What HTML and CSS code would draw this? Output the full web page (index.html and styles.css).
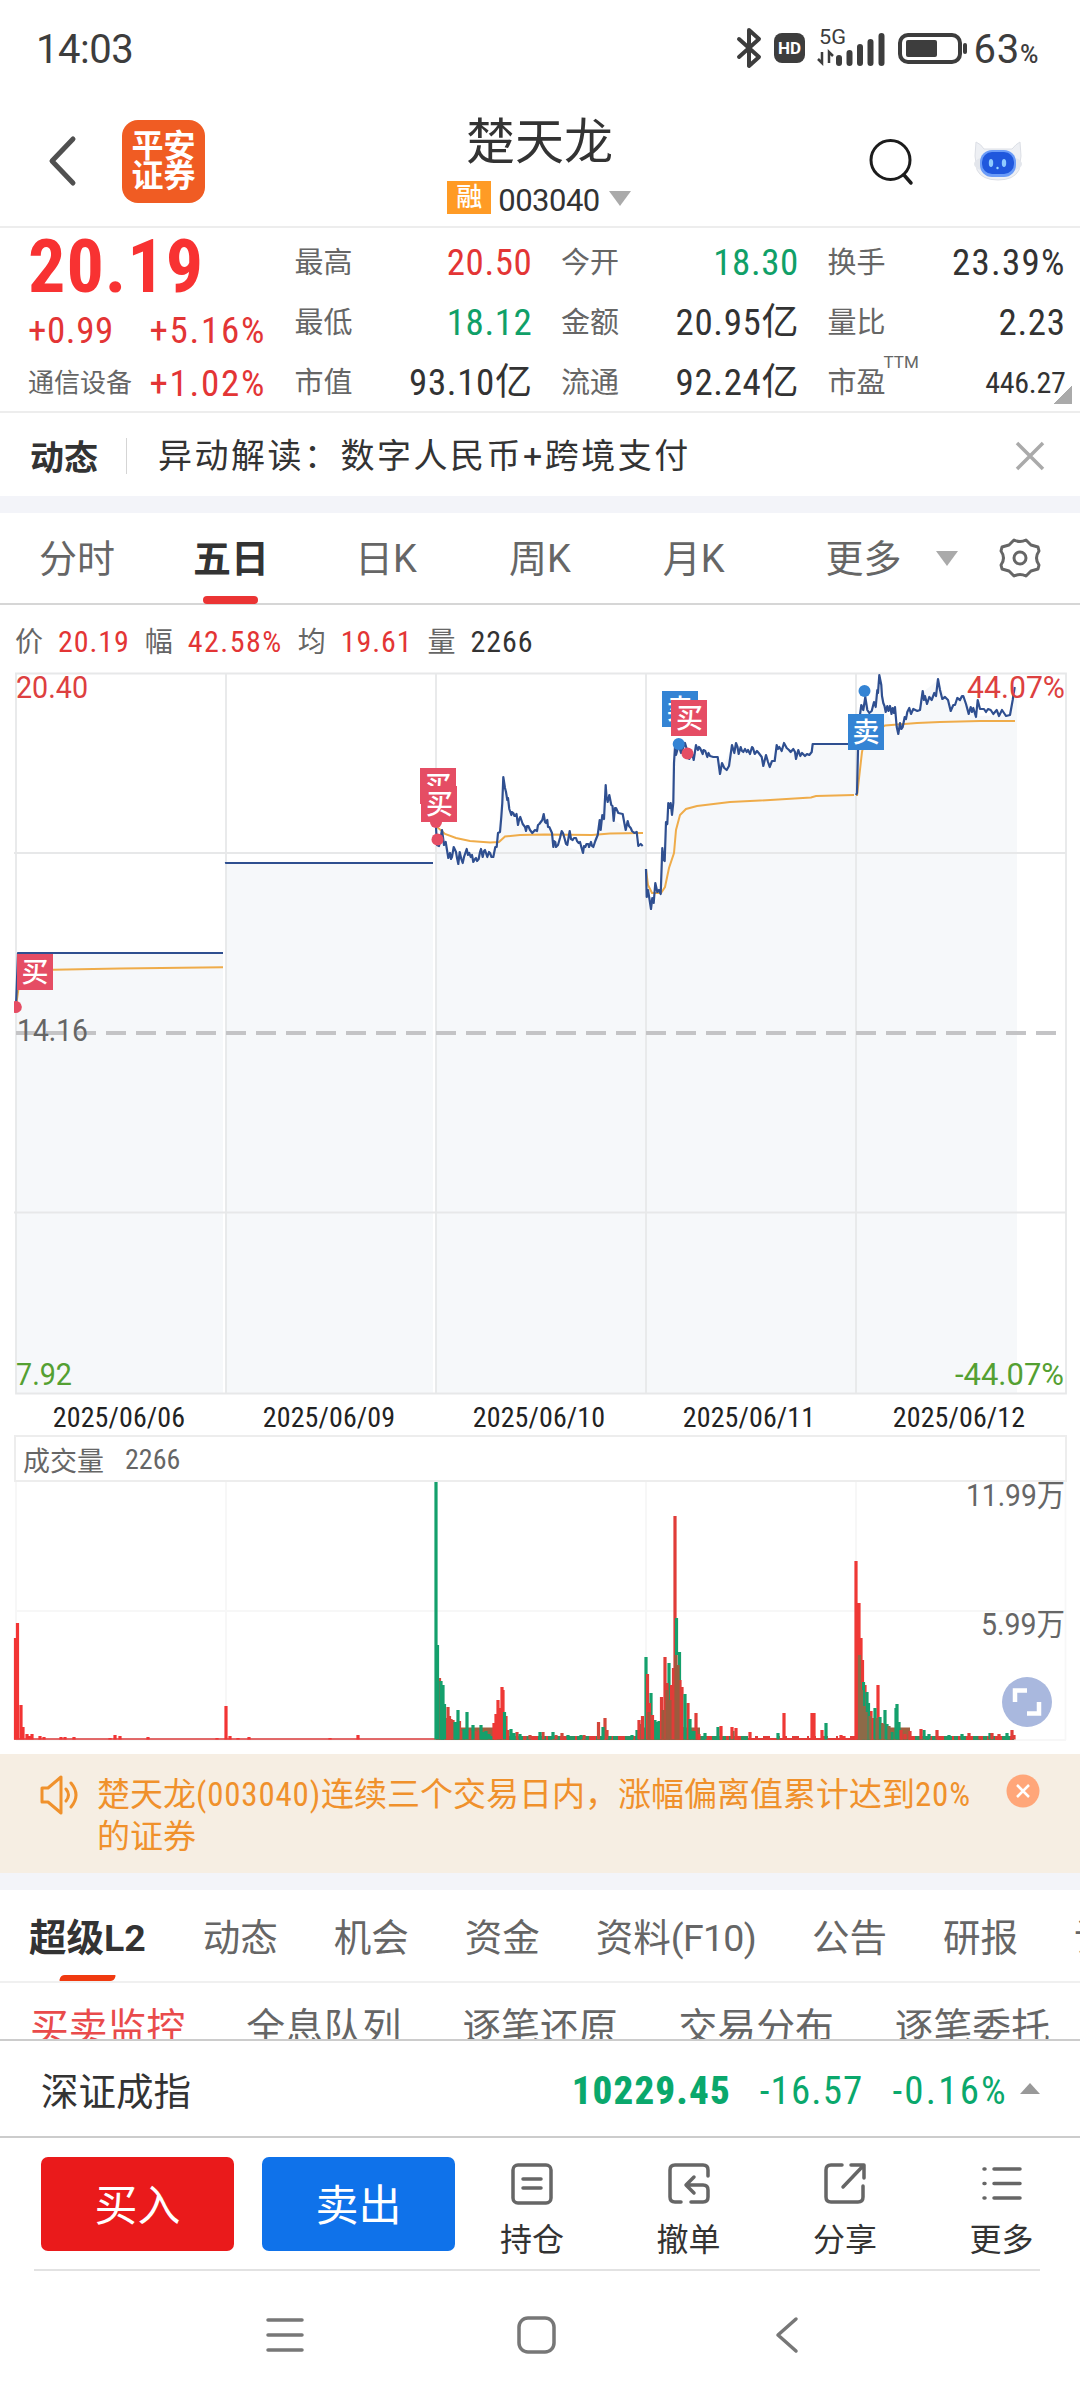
FILE: index.html
```html
<!DOCTYPE html>
<html lang="zh-CN">

<head>
    <meta charset="UTF-8">
    <meta name="viewport" content="width=device-width, initial-scale=1.0">
    <title>楚天龙 003040</title>
    <link rel="stylesheet" href="styles.css">
</head>

<body>
    <div class="status-bar">
        <span class="time">14:03</span>
        <svg class="status-icons" width="232" height="44" viewBox="733 26 232 44">
            <path d="M737 39l20 18-10 9V30l10 9-20 18" fill="none" stroke="#3d3d3d" stroke-width="4" stroke-linejoin="round" stroke-linecap="round" />
            <rect x="772" y="33" width="31" height="30" rx="8" fill="#3d3d3d" />
            <text x="787.500" y="54" class="hd">HD</text>
            <text x="817" y="44" class="net" textLength="27" lengthAdjust="spacingAndGlyphs">5G</text>
            <path d="M820 52v11l-4-4M827 63V52l4 4" fill="none" stroke="#3d3d3d" stroke-width="2.500" />
            <path d="M837 63v-5M847.500 63v-10M858 63v-16M868.500 63v-21M879.500 63v-27" stroke="#3d3d3d" stroke-width="6" stroke-linecap="round" />
            <rect x="898" y="35" width="60" height="27" rx="8" fill="none" stroke="#3d3d3d" stroke-width="4" />
            <rect x="904" y="40" width="31" height="17" rx="2" fill="#3d3d3d" />
            <rect x="961" y="43" width="4" height="11" rx="2" fill="#3d3d3d" />
        </svg>
        <span class="battery">63<small>%</small></span>
    </div>

    <div class="header">
        <svg class="back" width="32" height="52" viewBox="0 0 32 52">
            <path d="M27 4L6 26l21 22" fill="none" stroke="#505050" stroke-width="5" stroke-linecap="round" stroke-linejoin="round" />
        </svg>
        <div class="logo"><span>平安</span><span>证券</span></div>
        <div class="title">
            <h1>楚天龙</h1>
            <div class="code"><span class="rong">融</span><span class="code-no">003040</span><i class="tri-down"></i></div>
        </div>
        <svg class="search" width="48" height="50" viewBox="868 138 48 50">
            <circle cx="890.500" cy="162" r="19.500" fill="none" stroke="#1c1c1c" stroke-width="3" />
            <path d="M904 177l7 8" stroke="#1c1c1c" stroke-width="3.500" stroke-linecap="round" />
        </svg>
        <svg class="robot" width="52" height="44" viewBox="972 141 52 44">
            <path d="M976 144q5 2 8 7h28q4-5 8-7l1 14-2 14q-5 10-21 10t-21-10l-2-14z" fill="#eef0f4" stroke="#dcdfe6" />
            <ellipse cx="998" cy="166" rx="24" ry="9" fill="#e3e6ec" />
            <rect x="980" y="152" width="36" height="27" rx="12" fill="#6b9cf8" />
            <rect x="982" y="154" width="32" height="22" rx="10" fill="#1f57dd" />
            <ellipse cx="991" cy="165" rx="2.200" ry="4" fill="#8fcbff" />
            <ellipse cx="1004" cy="165" rx="2.200" ry="4" fill="#8fcbff" />
            <circle cx="997.500" cy="170" r="1.200" fill="#9ddcff" />
        </svg>
    </div>

    <div class="quote">
        <div class="main-price">
            <div class="price num">20.19</div>
            <div class="change num red"><span>+0.99</span><span class="pct">+5.16%</span></div>
            <div class="sector"><span class="sector-name">通信设备</span><span class="num pct red">+1.02%</span></div>
        </div>
        <div class="quote-col">
            <div class="cell"><label>最高</label><span class="num red">20.50</span></div>
            <div class="cell"><label>最低</label><span class="num green">18.12</span></div>
            <div class="cell"><label>市值</label><span class="num">93.10亿</span></div>
        </div>
        <div class="quote-col">
            <div class="cell"><label>今开</label><span class="num green">18.30</span></div>
            <div class="cell"><label>金额</label><span class="num">20.95亿</span></div>
            <div class="cell"><label>流通</label><span class="num">92.24亿</span></div>
        </div>
        <div class="quote-col">
            <div class="cell"><label>换手</label><span class="num turnover">23.39%</span></div>
            <div class="cell"><label>量比</label><span class="num">2.23</span></div>
            <div class="cell"><label>市盈<sup>TTM</sup></label><span class="num pe">446.27</span></div>
        </div>
        <i class="corner"></i>
    </div>

    <div class="news">
        <b>动态</b>
        <span class="news-text">异动解读：数字人民币+跨境支付</span>
        <svg width="30" height="30" viewBox="0 0 30 30">
            <path d="M2 2l26 26M28 2L2 28" stroke="#aaa" stroke-width="3.500" />
        </svg>
    </div>

    <div class="tabs">
        <span>分时</span>
        <span class="active">五日</span>
        <span>日K</span>
        <span>周K</span>
        <span>月K</span>
        <span class="more">更多</span>
        <i class="tri-down"></i>
        <svg width="44" height="44" viewBox="-22 -22 44 44">
            <path d="M-6-18q6 3 12 0l5 5 7 2 1 4q-5 7 0 14l-1 4-7 2-5 5q-6-3-12 0l-5-5-7-2-1-4q5-7 0-14l1-4 7-2z" fill="none" stroke="#666" stroke-width="3" stroke-linejoin="round" />
            <circle r="6" fill="none" stroke="#666" stroke-width="3" />
        </svg>
    </div>

    <div class="info">
        <label>价</label><span class="num red">20.19</span>
        <label>幅</label><span class="num pct red">42.58%</span>
        <label>均</label><span class="num red">19.61</span>
        <label>量</label><span class="num">2266</span>
    </div>

    <svg class="price-chart" width="1080" height="724" viewBox="0 672 1080 724">
        <!-- area under the price line -->
        <g fill="#f6f8fa">
            <path d="M16 1394V1007L18 953H223V1394z" />
            <path d="M223 1394H226V863H433V1394z" />
            <path d="M433 1394H436V827L437 845 442 832 448 858 458 862 467 849 473 862 481 850 493 857 498 833 503 777 511 815 532 832 544 815 552 833 555 843 583 852 597 835 606 786 614 820 634 833 638 846H646V870L651 908 661 894 662 848 672 815 675 748 717 757 720 774 732 746 770 766 777 746 811 754 813 744H856V795L859 720 865 697 871 712 879 676 886 711 898 734 907 713 920 710 923 692 938 680 951 710 963 696 976 716 1010 715 1015 688H1017V1394z" />
        </g>
        <g stroke="#e7e8e9" stroke-width="1.800" fill="none">
            <path d="M15 673.500H1066V1393.500H16V673.500M226 674V1394M436 674V1394M646 674V1394M856 674V1394M14 853H1066M14 1212.500H1066" />
        </g>
        <path d="M16 1033H1060" stroke="#c4c4c6" stroke-width="4" stroke-dasharray="20 10" />
        <!-- average -->
        <g fill="none" stroke="#efac4a" stroke-width="2">
            <path d="M16 1006L19 985 24 973 53 969.700 120 968.500 223 967.300" />
            <path d="M436 826L445 834 456 838 470 841 490 842.500 499 842 505 836.500 520 835 545 834.500 592 835 610 833.500 643 833" />
            <path d="M646 869L648 885 652 893 661 893 665 887 669 868 674 853 676 830 680 815 686 809 697 806 730 802 760 800.500 811 797.500 816 796 854 795" />
            <path d="M857 796L862 752 866 735 885 725.500 917 723 940 722 980 721 1015 721" />
        </g>
        <!-- price -->
        <g fill="none" stroke="#2f4f90" stroke-width="2.200" stroke-linejoin="round">
            <path d="M16 1006L18 953H223M226 862V863H433" />
            <path d="M436 827L437 845 439 846 442 830 444 845 445.700 842 447 850 448.300 858 450 853 451 859 452 857 453.700 847 456 852 457 858 458.300 864 459.700 852 461.300 859 462.700 863 464 857 466.700 849 468 855 469.300 853 470.700 857 472 855 473.300 862 475 859 476 858 477 861 478.700 859 480 852 481 849 482.700 857 484 851 485 850 487.300 857 489 852 490 853 491.500 857 493.300 857 495.300 847 496.700 847 498 833 500 832 501.300 817 502.300 803 503.300 777 505 788 506 792 507.300 800 508 798 509.300 809 511.300 815 512 812 513.300 813 514.500 816 515.700 816 516.500 814 518 825 519 820 520.300 817 522.700 824 525 827 526 831 527 826 528.300 826 530 830 532.300 833 535 830 537 831 538 825 539.300 824 542.300 820 543.700 814 545 822 546 823 547.300 820 548 827 549.300 827 552 833 553.300 847 554 841 555.300 842 556 847 558 845 560 838 561.700 831 563 833 565 840 566 844 567.300 845 569.700 831 571 839 572.700 840 574 838 576 838 577 841 578.700 843 580 842 581.300 847 583 853 584 846 585.300 847 586.500 844 588.300 844 589 847 591 842 592 846 593.300 847 595.300 841 597.700 835 599.700 820 600.700 830 602.300 815 604 819 605.700 785 606.500 797 607.700 802 609.300 795 611.300 805 612.500 806 613.700 821 615 808 616 808 618.300 813 622.700 814 624.700 825 625.700 830 627.700 821 629 826 630.700 828 632 831 634.300 833 636.700 832 638.300 846 640.700 844 642.700 846" />
            <path d="M646 869L646.700 897 648 890 649.300 898 651 909 652.300 898 653.700 903 655.300 883 657.300 892 659 890 660.700 894 662.300 848 663.700 860 664.700 861 666 822 667.300 824 668.300 803 669.700 808 670.700 803 672 815 673.300 803 674 763 675 747 676 755 678.700 745 681 753 685 743 687 750 689.300 759 691.300 753 692.500 755 693.700 760 696 745 697 748 698 750 699 747 700 748 702.700 754 703.500 750 705.300 751 707.300 757 708.500 753 710 756 713.300 757 717.700 757 720 774 722 763 724.300 768 726.700 770 729 766 732 745 734.300 753 736 743 737.500 747 738.700 754 740.700 747 742 751 743.300 752 745 749 746.700 752 748 750 750 754 752 747 753 748 754.700 754 757 751 758.700 753 761.700 757 763.300 766 766 755 768 762 769.700 767 772 761 774.700 761 776.700 745 778 749 779.300 747 781.700 751 784 743 786.700 748 789 750 790.700 752 793.300 749 795 752 796 759 798.300 750 800.300 756 802 753 805 756 807 754 809.300 755 811.700 752 812.700 744H856" />
            <path d="M856 795L857 793 858 750 859.300 720 861.300 705 863.300 710 865.300 697 867.300 710 869.300 713 871.700 711 874 702 875.700 707 877.300 690 878 693 879.300 675 881.300 685 882 696 883.300 703 884.500 706 885.700 712 887.300 706 888.500 711 890 706 891.500 714 892.700 708 894 713 895 707 896.700 727 898.300 734 900 723 901.300 729 902.700 727 904.700 717 906 719 907.300 712 909.300 708 911 714 913.300 709 917.300 711 920 710 922.700 691 924 700 925 696 927 704 929.300 697 931.700 700 934.300 693 936 696 938 679 940 690 942.300 699 945 697 948 700 950.700 711 953.300 705 955 705 957.300 698 960 700 962 696 963.300 696 966 704 968.700 714 970.700 707 972 712 973.300 708 976 717 977.700 700 980 709 984 709 986 712 988 709 990.700 710 993.300 714 996.700 710 999 716 1002 710 1006 716 1010 715 1012.700 700 1014.700 687" />
        </g>
        <!-- trade marks -->
        <g class="marks">
            <path d="M14 1001.300a6 6 0 1 1 0 11.400z" fill="#e54d64" />
            <rect x="17" y="954" width="36" height="36" fill="#e54d64" /><text x="35" y="981.500">买</text>
            <circle cx="436" cy="822" r="6" fill="#e54d64" />
            <circle cx="437.500" cy="839.500" r="6" fill="#e54d64" />
            <rect x="420" y="768" width="36" height="36" fill="#e54d64" /><text x="438" y="795.500">买</text>
            <rect x="421" y="786" width="36" height="36" fill="#e54d64" /><text x="439.500" y="813.500">买</text>
            <circle cx="678.700" cy="744" r="6" fill="#3484d4" />
            <circle cx="687.500" cy="753.500" r="6" fill="#e54d64" />
            <rect x="662" y="691" width="36" height="36" fill="#3484d4" /><text x="680" y="718.500">卖</text>
            <rect x="671" y="700" width="36" height="36" fill="#e54d64" /><text x="689.500" y="727.500">买</text>
            <circle cx="864.500" cy="691" r="6" fill="#3484d4" />
            <rect x="848" y="714" width="36" height="36" fill="#3484d4" /><text x="866" y="741.500">卖</text>
        </g>
        <g class="axis">
            <text x="16" y="698" fill="#dd4040" textLength="72" lengthAdjust="spacingAndGlyphs">20.40</text>
            <text x="17" y="1041" fill="#666" textLength="71" lengthAdjust="spacingAndGlyphs">14.16</text>
            <text x="16" y="1385" fill="#54a032" textLength="56" lengthAdjust="spacingAndGlyphs">7.92</text>
            <text x="967" y="698" fill="#dd4040" textLength="98" lengthAdjust="spacingAndGlyphs">44.07%</text>
            <text x="955" y="1385" fill="#54a032" textLength="109" lengthAdjust="spacingAndGlyphs">-44.07%</text>
        </g>
    </svg>

    <div class="dates num">
        <span>2025/06/06</span>
        <span>2025/06/09</span>
        <span>2025/06/10</span>
        <span>2025/06/11</span>
        <span>2025/06/12</span>
    </div>

    <div class="vol-head">成交量<span class="num">2266</span></div>
    <div class="vol-box">
        <svg class="vol-chart" width="1080" height="272" viewBox="0 1482 1080 272">
            <path d="M16 1482V1740M226 1482V1740M436 1482V1740M646 1482V1740M856 1482V1740M1065.500 1482V1740M16 1611H1066M16 1740H1066" stroke="#f7f7f7" stroke-width="1.800" />
            <path d="M14 1739H436M856 1739H1014" stroke="#d93a3a" stroke-width="1.500" />
            <path d="M436 1738H748M856 1738H1014" stroke="#2a9363" stroke-width="4" />
            <path d="M436 1738H1014" stroke="#e03c38" stroke-width="4" stroke-dasharray="3 5 7 8 2 4" />
            <path d="M448 1733.500H500M640 1733.500H700M856 1733.500H910" stroke="#a0603f" stroke-width="12" />
            <path d="M748 1739H856" stroke="#e03c38" stroke-width="2" />
            <g stroke-width="3.200" fill="none">
                <path stroke="#f23434" d="M15.500 1739.500V1638M17.500 1739.500V1623M21 1739.500V1705M23 1739.500V1727M27 1739.500V1734M32 1739.500V1734M29 1739.500V1736M40 1739.500V1736M44 1739.500V1737M61 1739.500V1737M65 1739.500V1737M74 1739.500V1737M110 1739.500V1738M115 1739.500V1735M120 1739.500V1736M148 1739.500V1737M217 1739.500V1738M226 1739.500V1706M230 1739.500V1736M238 1739.500V1738M249 1739.500V1737M330 1739.500V1738M358 1739.500V1735" />
                <path stroke="#d3463a" d="M439.500 1739.500V1678M446 1739.500V1718M448 1739.500V1707M449.500 1739.500V1716M451 1739.500V1719M453 1739.500V1720M459.500 1739.500V1721M462 1739.500V1731M469 1739.500V1730M471 1739.500V1731M475 1739.500V1731M477 1739.500V1732M479 1739.500V1730M508 1739.500V1730M517 1739.500V1732M525 1739.500V1736M530 1739.500V1735M543 1739.500V1732M556 1739.500V1735M562 1739.500V1733M598.500 1739.500V1722M605 1739.500V1718M607 1739.500V1730M584 1739.500V1735" />
                <path stroke="#14a06c" d="M436 1739.500V1482M437.500 1739.500V1645M441 1739.500V1681M443 1739.500V1685M444.500 1739.500V1704M455 1739.500V1722M458 1739.500V1710M464 1739.500V1729M467 1739.500V1712M473 1739.500V1725M481 1739.500V1725M483 1739.500V1732M486 1739.500V1731M489 1739.500V1734M492 1739.500V1736" />
                <path stroke="#ee3835" d="M494 1739.500V1723M496 1739.500V1714M498 1739.500V1700M500 1739.500V1708M502 1739.500V1687M503 1739.500V1690M506 1739.500V1716" />
                <path stroke="#14a06c" d="M504.500 1739.500V1712M511 1739.500V1729M514 1739.500V1733M520 1739.500V1734M540 1739.500V1732M553 1739.500V1732M568 1739.500V1735M581 1739.500V1735M603 1739.500V1727M610 1739.500V1736M632 1739.500V1735M637 1739.500V1730M641 1739.500V1724M646 1739.500V1657M651 1739.500V1693M655 1739.500V1720M657 1739.500V1722M659 1739.500V1721M669 1739.500V1663" />
                <path stroke="#e03c38" d="M639 1739.500V1720M642.500 1739.500V1716M647.500 1739.500V1674M649.500 1739.500V1703M652.500 1739.500V1715M661.500 1739.500V1697M665 1739.500V1657M667 1739.500V1683M671.500 1739.500V1685M673.500 1739.500V1668M675 1739.500V1516M680 1739.500V1680M682 1739.500V1687M684 1739.500V1727M688 1739.500V1703M696 1739.500V1713" />
                <path stroke="#14a06c" d="M676.500 1655V1618M679.500 1680V1652M685 1739.500V1694M690 1739.500V1719M692 1739.500V1731M694 1739.500V1731M705 1739.500V1733M718 1739.500V1727M778 1739.500V1733M733 1739.500V1731M826 1739.500V1723" />
                <path stroke="#9b5b3e" d="M663 1739.500V1710M667 1739.500V1690M670 1739.500V1700M676 1739.500V1655M678 1739.500V1665M649 1739.500V1712" />
                <path stroke="#ee3835" d="M699 1739.500V1734M721 1739.500V1726M732 1739.500V1727M736 1739.500V1728M750 1739.500V1732M784 1739.500V1713M812 1739.500V1713M814 1739.500V1713M822 1739.500V1730M841 1739.500V1735M844 1739.500V1736M856 1739.500V1561M859 1739.500V1603M861 1739.500V1638M862.500 1739.500V1660M865 1739.500V1685M871 1739.500V1711M873 1739.500V1718M878 1739.500V1685M882 1739.500V1723" />
                <path stroke="#14a06c" d="M863.500 1739.500V1682M867 1739.500V1692M868.500 1739.500V1703M875 1739.500V1708M880 1739.500V1717M885 1739.500V1710M887 1739.500V1724M892 1739.500V1732M896 1739.500V1708M897 1739.500V1704M899 1739.500V1722M924 1739.500V1730M929 1739.500V1734M949 1739.500V1735M962 1739.500V1734M990 1739.500V1733M1007 1739.500V1733" />
                <path stroke="#8d6a48" d="M859.500 1739.500V1655M861.500 1739.500V1690M864 1739.500V1706M866 1739.500V1712M870 1739.500V1716M877 1739.500V1718M883 1739.500V1724M889 1739.500V1726" />
                <path stroke="#e03c38" d="M901 1739.500V1730M905 1739.500V1734M910 1739.500V1731M921 1739.500V1729M937 1739.500V1730M969 1739.500V1733M980 1739.500V1736M992 1739.500V1733M999 1739.500V1734M1012 1739.500V1730M1014 1739.500V1735" />
            </g>
            <g class="axis" fill="#666">
                <text x="966" y="1506" textLength="99" lengthAdjust="spacingAndGlyphs">11.99万</text>
                <text x="981" y="1635" textLength="84" lengthAdjust="spacingAndGlyphs">5.99万</text>
            </g>
            <circle cx="1027" cy="1702" r="25" fill="#a9b8de" />
            <path d="M1015 1702V1690.500H1027M1039 1702V1713.500H1027" fill="none" stroke="#fff" stroke-width="4.500" />
        </svg>
    </div>

    <div class="notice">
        <svg width="42" height="42" viewBox="0 0 42 42">
            <path d="M2 14h6L21 3v36L8 28H2z" fill="none" stroke="#f0912c" stroke-width="3" stroke-linejoin="round" />
            <path d="M26 15q5 6 0 12M31 9q10 12 0 24" fill="none" stroke="#f0912c" stroke-width="3" stroke-linecap="round" />
        </svg>
        <p>楚天龙<span class="num">(003040)</span>连续三个交易日内，涨幅偏离值累计达到<span class="num">20%</span><br>的证券</p>
        <svg width="34" height="34" viewBox="0 0 34 34">
            <circle cx="17" cy="17" r="16.500" fill="#ffa679" />
            <path d="M11 11l12 12M23 11L11 23" stroke="#fff" stroke-width="2.500" />
        </svg>
    </div>

    <div class="sections">
        <span class="active">超级L2</span>
        <span>动态</span>
        <span>机会</span>
        <span>资金</span>
        <span>资料<span class="f10">(F10)</span></span>
        <span>公告</span>
        <span>研报</span>
        <span>诊</span>
    </div>
    <div class="sub-tabs">
        <span class="active">买卖监控</span>
        <span>全息队列</span>
        <span>逐笔还原</span>
        <span>交易分布</span>
        <span>逐笔委托</span>
    </div>

    <div class="index-bar">
        <span class="index-name">深证成指</span>
        <b class="num">10229.45</b>
        <span class="num diff">-16.57</span>
        <span class="num rate">-0.16%</span>
        <i class="tri-up"></i>
    </div>

    <div class="actions">
        <button class="buy">买入</button>
        <button class="sell">卖出</button>
        <div class="action">
            <svg width="44" height="44" viewBox="0 0 44 44">
                <rect x="3" y="3" width="38" height="38" rx="5" />
                <path d="M13 17h18M13 26h18" />
            </svg>
            <span>持仓</span>
        </div>
        <div class="action">
            <svg width="44" height="44" viewBox="0 0 44 44">
                <path d="M41 14V8q0-5-5-5H8Q3 3 3 8v27q0 5 5 5h6M24 40h12q5 0 5-5V28q0-5-5-5H21M27 15l-8 8 8 8" />
            </svg>
            <span>撤单</span>
        </div>
        <div class="action">
            <svg width="44" height="44" viewBox="0 0 44 44">
                <path d="M19 3H8Q3 3 3 8v27q0 5 5 5h27q5 0 5-5V24M28 3h13v13M40 4L20 25" />
            </svg>
            <span>分享</span>
        </div>
        <div class="action">
            <svg width="44" height="44" viewBox="0 0 44 44">
                <path d="M14 7h26M14 21.500h26M14 36h26M4 7h1M4 21.500h1M4 36h1" />
            </svg>
            <span>更多</span>
        </div>
    </div>

    <div class="nav">
        <svg width="40" height="40" viewBox="0 0 40 40">
            <path d="M3 4h34M3 19h34M3 34h34" />
        </svg>
        <svg width="40" height="40" viewBox="0 0 40 40">
            <rect x="3" y="2" width="35" height="34" rx="9" />
        </svg>
        <svg width="40" height="40" viewBox="0 0 40 40">
            <path d="M29 3L11 19l18 16" />
        </svg>
    </div>
</body>

</html>
```
FILE: styles.css
```css
* {
    box-sizing: border-box;
}

body {
    margin: 0;
    width: 1080px;
    height: 2400px;
    overflow: hidden;
    background: #fff;
    color: #333;
    font-family: Roboto, "Noto Sans CJK SC", sans-serif;
}

svg {
    display: block;
    flex: none;
}

.num {
    font-stretch: semi-condensed;
    letter-spacing: 0.600px;
}

.red {
    color: #e33535;
}

.green {
    color: #10a068;
}

.tri-down {
    border: 11px solid transparent;
    border-top: 15px solid #aaa;
    border-bottom: 0;
}

/* status bar */
.status-bar {
    display: flex;
    align-items: center;
    height: 96px;
    padding: 0 41px 0 36px;
    color: #3d3d3d;
    font-size: 40px;
}

.time {
    flex: 1;
    letter-spacing: -0.500px;
    padding-top: 2px;
}

.battery {
    margin-left: 7px;
    padding-top: 2px;
    white-space: nowrap;
    letter-spacing: 0.700px;
}

.battery small {
    font-size: 25px;
    font-weight: 500;
}

.hd {
    font-size: 17px;
    font-weight: 700;
    fill: #fff;
    text-anchor: middle;
}

.net {
    font-size: 20px;
    fill: #3d3d3d;
}

/* header */
.header {
    display: flex;
    align-items: center;
    height: 132px;
    border-bottom: 2px solid #ededed;
}

.back {
    margin-left: 46px;
}

.logo {
    display: flex;
    flex-direction: column;
    justify-content: center;
    align-items: center;
    width: 83px;
    height: 83px;
    margin-left: 44px;
    border-radius: 16px;
    background: #f05c23;
    color: #fff;
    font-size: 32px;
    font-weight: 700;
    line-height: 30px;
}

.title {
    display: flex;
    flex-direction: column;
    align-items: center;
    width: 335px;
    margin-left: 167px;
    padding-top: 9px;
}

.title h1 {
    margin: 0;
    font-size: 49px;
    font-weight: 400;
    line-height: 66px;
}

.code {
    display: flex;
    align-items: center;
    height: 46px;
    margin-left: -1px;
    font-size: 31px;
}

.code-no {
    padding-top: 3px;
    letter-spacing: -0.500px;
}

.rong {
    width: 44px;
    height: 33px;
    margin: -2px 7px 0 0;
    background: #ff9b25;
    color: #fff;
    font-size: 26px;
    font-weight: 500;
    line-height: 33px;
    text-align: center;
}

.code .tri-down {
    margin: -1px 0 0 9px;
}

.search {
    margin-left: 161px;
}

.robot {
    margin-left: 56px;
}

/* quote */
.quote {
    position: relative;
    display: grid;
    grid-template-columns: repeat(4, 238px);
    column-gap: 28.500px;
    height: 185px;
    padding: 5px 0 0 28px;
    border-bottom: 2px solid #ededed;
    white-space: nowrap;
}

.price {
    color: #f83232;
    font-size: 74px;
    font-weight: 700;
    line-height: 68px;
    letter-spacing: 1px;
}

.change {
    display: flex;
    justify-content: space-between;
    font-size: 37px;
    line-height: 60px;
}

.pct {
    letter-spacing: 1.700px;
}

.sector {
    display: flex;
    justify-content: space-between;
    align-items: center;
    font-size: 37px;
    line-height: 45px;
}

.sector-name {
    color: #666;
    font-size: 26px;
}

.cell {
    display: flex;
    justify-content: space-between;
    align-items: center;
    height: 60px;
    font-size: 37px;
    line-height: 60px;
}

.cell label {
    color: #666;
    font-size: 29px;
}

.cell sup {
    margin-left: -2px;
    font-size: 17px;
    line-height: 0;
    vertical-align: 25px;
}

.cell .turnover {
    letter-spacing: 1.200px;
}

.cell .pe {
    font-size: 30px;
    letter-spacing: -0.300px;
}

.corner {
    position: absolute;
    right: 8px;
    bottom: 7px;
    width: 19px;
    height: 19px;
    background: linear-gradient(135deg, transparent 50%, #aaa 50%);
}

/* news */
.news {
    display: flex;
    align-items: center;
    height: 83px;
    padding: 2px 35px 0 30px;
    font-size: 34px;
}

.news-text {
    flex: 1;
    margin-left: 28px;
    padding-left: 31px;
    border-left: 1px solid #d5d5d5;
    line-height: 36px;
    letter-spacing: 2.500px;
}

/* period tabs */
.tabs {
    display: flex;
    align-items: center;
    height: 109px;
    padding-left: 39px;
    border-top: 17px solid #f3f4f9;
    border-bottom: 2px solid #d6d6d6;
    color: #666;
    font-size: 38px;
    line-height: 90px;
}

.tabs span {
    margin-right: 92px;
    padding-top: 1px;
}

.tabs span:first-child {
    margin-right: 78px;
}

.tabs .active {
    position: relative;
    color: #333;
    font-weight: 700;
    margin-right: 86px;
}

.tabs .active::after {
    content: "";
    position: absolute;
    left: 10px;
    bottom: 0;
    width: 55px;
    height: 8px;
    border-radius: 4px;
    background: #eb3434;
}

.tabs .more {
    margin: 0 34px 0 9px;
}

.tabs svg {
    margin-left: 40px;
}

/* values at the cursor */
.info {
    display: flex;
    align-items: center;
    gap: 15px;
    height: 67px;
    padding: 5px 0 0 15px;
    font-size: 30px;
}

.info label {
    padding-bottom: 2px;
    color: #666;
    font-size: 28px;
}

.info .num {
    letter-spacing: 0.900px;
}

.info .pct {
    letter-spacing: 1.500px;
}

.axis {
    font-size: 30.500px;
}

.marks text {
    fill: #fff;
    font-size: 27px;
    font-weight: 500;
    text-anchor: middle;
}

.dates {
    display: grid;
    grid-template-columns: repeat(5, 210px);
    height: 39px;
    padding-left: 14px;
    font-size: 28px;
    letter-spacing: 0.100px;
    line-height: 43px;
    text-align: center;
    color: #222;
}

.vol-head {
    display: flex;
    align-items: center;
    height: 47px;
    margin: 0 13px 0 14px;
    padding: 2px 0 0 7px;
    border: 2px solid #ededed;
    color: #666;
    font-size: 27px;
}

.vol-head .num {
    margin-left: 21px;
    font-size: 28px;
    letter-spacing: 0;
}

.vol-box {
    height: 272px;
}

/* notice */
.notice {
    display: flex;
    height: 119px;
    padding: 20px 40px 0 40px;
    background: #f6eee3;
    color: #f0912c;
    font-size: 33px;
    line-height: 42px;
}

.notice p {
    flex: 1;
    margin: 0 0 0 15px;
    white-space: nowrap;
}

.notice .num {
    letter-spacing: 0.800px;
}

/* section tabs */
.sections {
    display: flex;
    height: 110px;
    padding-left: 29px;
    border-top: 17px solid #f3f4f9;
    border-bottom: 2px solid #f0f0f0;
    color: #666;
    font-size: 37.500px;
    line-height: 96px;
    white-space: nowrap;
    overflow: hidden;
}

.sections > span {
    flex: none;
    margin-right: 56px;
}

.sections .active {
    position: relative;
    margin-right: 57px;
    color: #333;
    font-weight: 700;
}

.sections .f10 {
    letter-spacing: -0.700px;
}

.sections .active::after {
    content: "";
    position: absolute;
    left: 31px;
    top: 85px;
    width: 55px;
    height: 6px;
    border-radius: 4px 1px;
    background: #f03a10;
    transform: skewX(-15deg);
}

.sub-tabs {
    display: flex;
    justify-content: space-between;
    height: 56px;
    padding: 17px 30px 0 30px;
    overflow: hidden;
    color: #666;
    font-size: 38.800px;
    line-height: 56px;
}

.sub-tabs .active {
    color: #e94b4b;
}

/* index */
.index-bar {
    display: flex;
    align-items: center;
    height: 99px;
    padding: 0 40px 0 41px;
    border-top: 2px solid #ccc;
    border-bottom: 2px solid #ccc;
    color: #0aa86c;
    font-size: 39px;
}

.index-bar .num {
    padding-top: 4px;
    letter-spacing: 1.100px;
}

.index-bar b {
    font-weight: 800;
}

.index-name {
    flex: 1;
    color: #333;
    font-size: 37.500px;
}

.diff {
    margin: 0 29px;
}

.index-bar .rate {
    letter-spacing: 2.200px;
}

.tri-up {
    margin-left: 12px;
    border: 10px solid transparent;
    border-top: 0;
    border-bottom: 11px solid #999;
}

/* buttons */
.actions {
    display: flex;
    height: 133px;
    margin: 0 40px 0 34px;
    padding: 19px 0 0 7px;
    border-bottom: 2px solid #e2e2e2;
}

.actions button {
    width: 193px;
    height: 94px;
    margin-right: 28px;
    padding: 0 0 4px;
    border: 0;
    border-radius: 7px;
    color: #fff;
    font: 43px Roboto, "Noto Sans CJK SC", sans-serif;
}

.buy {
    background: #ea1a1b;
}

.sell {
    background: #0f72ea;
}

.action {
    display: flex;
    flex-direction: column;
    align-items: center;
    width: 64px;
    margin: 5px 92.500px 0 0;
    font-size: 32px;
    line-height: 68px;
}

.action:last-child {
    margin-right: 0;
}

.actions .sell {
    margin-right: 45px;
}

.action svg {
    fill: none;
    stroke: #666;
    stroke-width: 3.500;
    stroke-linecap: round;
    stroke-linejoin: round;
}

.nav {
    display: flex;
    padding: 45px 0 0 265px;
    gap: 211px;
}

.nav svg {
    fill: none;
    stroke: #777;
    stroke-width: 3.500;
    stroke-linecap: round;
    stroke-linejoin: round;
}
```
